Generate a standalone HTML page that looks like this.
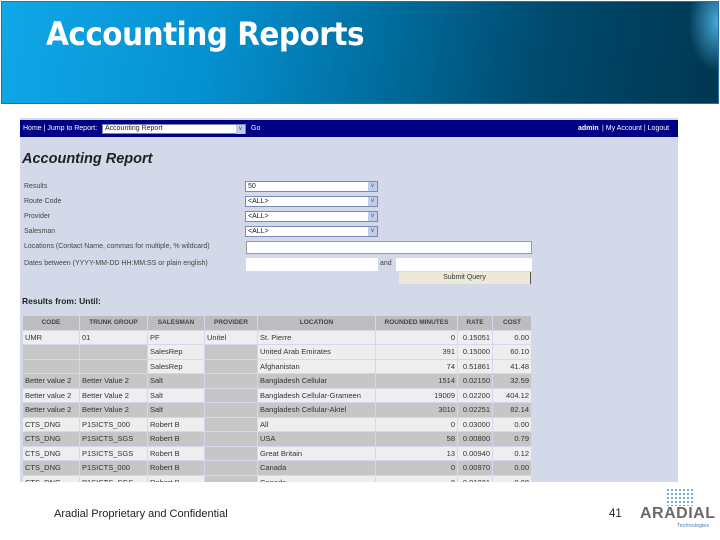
<!DOCTYPE html>
<html><head><style>
body{margin:0;width:720px;height:540px;background:#fff;position:relative;overflow:hidden;font-family:"Liberation Sans",sans-serif}
.banner{position:absolute;left:1px;top:1px;width:716px;height:101px;border:1px solid #2a6fa0;background:radial-gradient(ellipse 30px 50px at 716px 20px,rgba(90,200,250,0.8),rgba(0,0,0,0)),linear-gradient(100deg,#10a8e8 0%,#0590d0 30%,#006a9a 55%,#004a6e 75%,#003650 100%)}
.banner h1{position:absolute;left:44px;top:13px;margin:0;color:#fff;font-size:32px;font-weight:bold;font-family:"DejaVu Sans","Liberation Sans",sans-serif;letter-spacing:-0.5px;transform:scaleX(0.92);transform-origin:left}
.shot{position:absolute;left:20px;top:118px;width:658px;height:364px;background:#d3d9e8;overflow:hidden;font-size:7.5px;color:#333}
.nav{position:absolute;left:0;top:2px;width:658px;height:17px;background:#000085;color:#fff;font-size:7px}
.nav span{position:absolute;top:5px}
.sel{position:absolute;background:#fff;border:1px solid #7a8ab0;height:9px;font-size:7px;color:#222;padding-left:2px;line-height:9px}
.sel i{position:absolute;right:0;top:0;width:9px;height:9px;background:#c0cce8;font-style:normal;color:#3050a0;font-size:6px;text-align:center}
.inp{position:absolute;background:#fff;border:1px solid #999;height:11px}
.lbl{position:absolute;left:4px;font-size:7px;color:#444}
table{position:absolute;left:2px;top:197px;border-collapse:separate;border-spacing:1px;font-size:7.5px;color:#333}
td,th{height:13.5px;padding:0 2px;white-space:nowrap;line-height:13.5px}
th{background:#bdbdbd;font-weight:bold;font-size:6.5px;color:#444}
tr.l td{background:#eeeeee}tr.d td{background:#c6c6c6}
.r{text-align:right}
</style></head><body>
<div class="banner"><h1>Accounting Reports</h1></div>
<div class="shot">
<div class="nav"><span style="left:3px">Home | Jump to Report:</span>
<div class="sel" style="left:82px;top:4px;width:140px;height:8px;line-height:8px">Accounting Report<i>v</i></div>
<span style="left:231px">Go</span><span style="left:558px;font-weight:bold">admin</span><span style="left:582px">| My Account | Logout</span></div>
<div style="position:absolute;left:2px;top:33px;font-size:14.5px;font-weight:bold;font-style:italic;color:#222">Accounting Report</div>
<div class="lbl" style="top:65px">Results</div><div class="sel" style="left:225px;top:63px;width:129px">50<i>v</i></div>
<div class="lbl" style="top:80px">Route Code</div><div class="sel" style="left:225px;top:78px;width:129px">&lt;ALL&gt;<i>v</i></div>
<div class="lbl" style="top:95px">Provider</div><div class="sel" style="left:225px;top:93px;width:129px">&lt;ALL&gt;<i>v</i></div>
<div class="lbl" style="top:110px">Salesman</div><div class="sel" style="left:225px;top:108px;width:129px">&lt;ALL&gt;<i>v</i></div>
<div class="lbl" style="top:125px">Locations (Contact Name, commas for multiple, % wildcard)</div><div class="inp" style="left:226px;top:123px;width:284px"></div>
<div class="lbl" style="top:142px">Dates between (YYYY-MM-DD HH:MM:SS or plain english)</div><div class="inp" style="left:226px;top:140px;width:130px;border-color:#fff"></div>
<div class="lbl" style="left:360px;top:142px">and</div><div class="inp" style="left:376px;top:140px;width:134px;border-color:#fff"></div>
<div style="position:absolute;left:379px;top:154px;width:131px;height:12px;background:#ece9d8;border-right:1px solid #555;font-size:7px;text-align:center;line-height:12px">Submit Query</div>
<div style="position:absolute;left:2px;top:178px;font-size:8.5px;font-weight:bold;color:#222">Results from: Until:</div>
<table>
<tr><th style="width:52px">CODE</th><th style="width:63px">TRUNK GROUP</th><th style="width:52px">SALESMAN</th><th style="width:48px">PROVIDER</th><th style="width:113px">LOCATION</th><th style="width:77px">ROUNDED MINUTES</th><th style="width:30px">RATE</th><th style="width:34px">COST</th></tr>
<tr class="l"><td>UMR</td><td>01</td><td>PF</td><td>Unitel</td><td>St. Pierre</td><td class="r">0</td><td class="r">0.15051</td><td class="r">0.00</td></tr>
<tr class="d"><td></td><td></td><td style="background:#eee">SalesRep</td><td></td><td style="background:#eee">United Arab Emirates</td><td class="r" style="background:#eee">391</td><td class="r" style="background:#eee">0.15000</td><td class="r" style="background:#eee">60.10</td></tr>
<tr class="l"><td style="background:#c6c6c6"></td><td style="background:#c6c6c6"></td><td>SalesRep</td><td style="background:#c6c6c6"></td><td>Afghanistan</td><td class="r">74</td><td class="r">0.51861</td><td class="r">41.48</td></tr>
<tr class="d"><td>Better value 2</td><td>Better Value 2</td><td>Salt</td><td></td><td>Bangladesh Cellular</td><td class="r">1514</td><td class="r">0.02150</td><td class="r">32.59</td></tr>
<tr class="l"><td>Better value 2</td><td>Better Value 2</td><td>Salt</td><td style="background:#c6c6c6"></td><td>Bangladesh Cellular-Grameen</td><td class="r">19009</td><td class="r">0.02200</td><td class="r">404.12</td></tr>
<tr class="d"><td>Better value 2</td><td>Better Value 2</td><td>Salt</td><td></td><td>Bangladesh Cellular-Aktel</td><td class="r">3010</td><td class="r">0.02251</td><td class="r">82.14</td></tr>
<tr class="l"><td>CTS_DNG</td><td>P1SICTS_000</td><td>Robert B</td><td style="background:#c6c6c6"></td><td>All</td><td class="r">0</td><td class="r">0.03000</td><td class="r">0.00</td></tr>
<tr class="d"><td>CTS_DNG</td><td>P1SICTS_SGS</td><td>Robert B</td><td></td><td>USA</td><td class="r">58</td><td class="r">0.00800</td><td class="r">0.79</td></tr>
<tr class="l"><td>CTS_DNG</td><td>P1SICTS_SGS</td><td>Robert B</td><td style="background:#c6c6c6"></td><td>Great Britain</td><td class="r">13</td><td class="r">0.00940</td><td class="r">0.12</td></tr>
<tr class="d"><td>CTS_DNG</td><td>P1SICTS_000</td><td>Robert B</td><td></td><td>Canada</td><td class="r">0</td><td class="r">0.00970</td><td class="r">0.00</td></tr>
<tr class="l"><td>CTS_DNG</td><td>P1SICTS_SGS</td><td>Robert B</td><td style="background:#c6c6c6"></td><td>Canada</td><td class="r">8</td><td class="r">0.01021</td><td class="r">0.08</td></tr>
</table>
</div>
<div style="position:absolute;left:54px;top:508px;font-size:11px;color:#222">Aradial Proprietary and Confidential</div>
<div style="position:absolute;left:609px;top:508px;font-size:11.5px;color:#222">41</div>
<div style="position:absolute;left:666px;top:488px;width:28px;height:18px;background:radial-gradient(circle,#6aa8d8 1px,transparent 1.3px) 0 0/4px 4px"></div>
<div style="position:absolute;left:640px;top:505px;font-size:16px;font-weight:bold;color:#6a6a6a;letter-spacing:0.5px">ARADIAL</div>
<div style="position:absolute;left:677px;top:523px;font-size:5.5px;color:#4a7ab0">Technologies</div>
</body></html>
